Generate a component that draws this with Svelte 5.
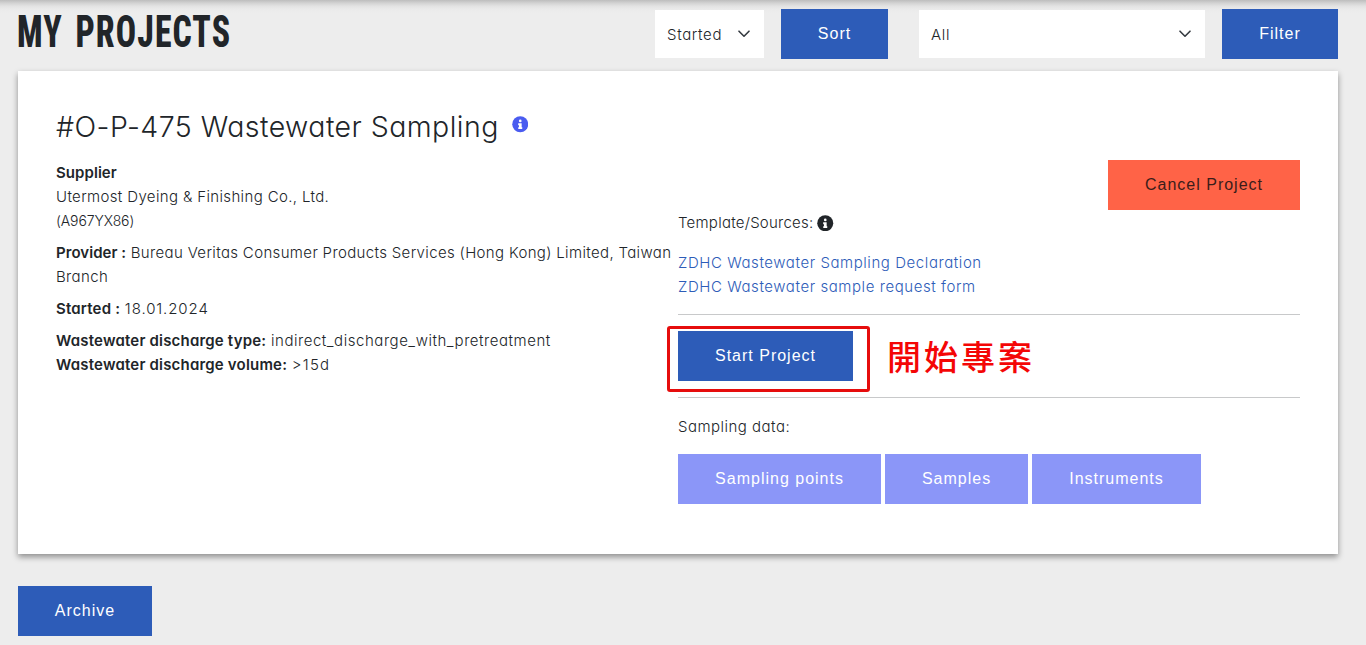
<script>
  const samplingActions = ['Sampling points', 'Samples', 'Instruments'];
</script>

{#snippet chevron()}
  <svg class="chevron" width="12" height="8" viewBox="0 0 12 8" fill="none" stroke="#343a40" stroke-width="1.6" stroke-linecap="round" stroke-linejoin="round"><path d="M1 1.2 6 6.2 11 1.2" /></svg>
{/snippet}

{#snippet info(color)}
  <svg class="info" width="16.5" height="16.5" viewBox="0 0 512 512"><circle cx="256" cy="256" r="248" fill={color} /><circle cx="256" cy="152" r="42" fill="#fff" /><path fill="#fff" d="M204 224h84c7 0 12 5 12 12v116h8c7 0 12 5 12 12v24c0 7-5 12-12 12h-104c-7 0-12-5-12-12v-24c0-7 5-12 12-12h12v-64h-12c-7 0-12-5-12-12v-40c0-7 5-12 12-12z" /></svg>
{/snippet}

<main>
  <header>
    <h1><span>MY PROJECTS</span></h1>
    <div class="select sort-by"><span>Started</span>{@render chevron()}</div>
    <button class="btn sort">Sort</button>
    <div class="select status"><span>All</span>{@render chevron()}</div>
    <button class="btn filter">Filter</button>
  </header>

  <section class="card">
    <div class="col">
      <h2><span>#O-P-475 Wastewater Sampling</span>{@render info('#4a5cf0')}</h2>
      <p><b>Supplier</b><br /><span class="company">Utermost Dyeing &amp; Finishing Co., Ltd.</span><br /><small>(A967YX86)</small></p>
      <p class="provider"><b>Provider :</b> <span class="company">Bureau Veritas Consumer Products Services (Hong Kong) Limited, Taiwan<br />Branch</span></p>
      <p><b class="wide">Started :</b> <span class="date">18.01.2024</span></p>
      <p><b class="wide">Wastewater discharge type:</b> <span class="type">indirect_discharge_with_pretreatment</span><br /><b class="wide">Wastewater discharge volume:</b> <span class="volume">&gt;15d</span></p>
    </div>
    <div class="col actions">
      <button class="btn cancel">Cancel Project</button>
      <div class="sources"><span>Template/Sources:</span>{@render info('#212529')}</div>
      <div class="links"><a href="#declaration">ZDHC Wastewater Sampling Declaration</a><a href="#request">ZDHC Wastewater sample request form</a></div>
      <div class="start-row">
        <div class="start"><button class="btn">Start Project</button><i class="marker"></i></div>
        <strong>開始專案</strong>
      </div>
      <div class="sampling">Sampling data:</div>
      <div class="group">
        {#each samplingActions as label}
          <button class="btn soft">{label}</button>
        {/each}
      </div>
    </div>
  </section>

  <button class="btn archive">Archive</button>
</main>

<style>
  :global(body) { margin: 0; background: #ededed; overflow: hidden; }
  * { box-sizing: border-box; }
  main {
    height: 645px; padding: 9px 28px 0 18px; color: #212529;
    font: 350 15px/24px Inter, "Noto Sans", sans-serif; font-feature-settings: "cv11"; letter-spacing: .48px;
    background: linear-gradient(#bdbdbd 0, #d2d2d2 3px, #e2e2e2 6px, #eaeaea 9px, #ededed 13px);
  }
  header { display: flex; height: 62px; align-items: flex-start; }
  h1 { flex: 1; margin: 0; font: 800 43.5px/46px "Roboto Condensed", Roboto, sans-serif; letter-spacing: 1.4px; word-spacing: 5px; white-space: nowrap; }
  h1 span { display: inline-block; transform: scaleX(.775); transform-origin: 0 0; margin: 1px 0 0 -1.5px; }
  .select { display: flex; align-items: center; justify-content: space-between; height: 48px; margin-top: 1px; padding: 1px 14px 0 12px; background: #fff; letter-spacing: .65px; }
  .chevron { margin-top: -2px; }
  .sort-by { width: 109px; margin-right: 17px; }
  .status { width: 286px; margin: 1px 17px 0 31px; }
  .btn { display: block; height: 50px; padding: 0; border: 0; background: #2d5cb8; color: #fff; font: 16px/24px "Liberation Sans", Arial, sans-serif; letter-spacing: 1px; }
  .sort { width: 107px; }
  .filter { width: 116px; }
  .card { display: flex; height: 483px; padding: 36px 38px; background: #fff; box-shadow: 0 3px 6px rgba(0,0,0,.4); }
  .col { width: 622px; white-space: nowrap; }
  h2 { display: flex; align-items: center; gap: 13px; margin: 0 0 16px; font-size: 28.5px; font-weight: 350; line-height: 38px; letter-spacing: .45px; }
  h2 span { padding-top: 1px; margin-bottom: -1px; }
  h2 .info { margin-top: -3px; }
  .info { display: block; }
  p { margin: 0 0 8px; }
  b { font-weight: 600; letter-spacing: .06px; }
  b.wide { letter-spacing: .19px; }
  small { font-size: 14px; letter-spacing: -.1px; }
  .company { letter-spacing: .36px; }
  .provider { word-spacing: -.1px; }
  .date { letter-spacing: .9px; }
  .type { letter-spacing: .54px; }
  .volume { letter-spacing: 1.2px; }
  .actions { display: flex; flex-direction: column; padding-top: 53px; }
  .cancel { width: 192px; align-self: flex-end; background: #ff6347; color: #3b1d1a; }
  .sources { display: flex; align-items: center; gap: 4px; margin-top: 1px; letter-spacing: .24px; }
  .links { display: flex; flex-direction: column; margin-top: 16px; padding-bottom: 15px; border-bottom: 1px solid #c8c9ca; letter-spacing: .57px; }
  a { color: #2d5cb8; text-decoration: none; }
  .start-row { display: flex; height: 83px; padding-top: 16px; border-bottom: 1px solid #c8c9ca; }
  .start { position: relative; width: 175px; height: 50px; }
  .start .btn { width: 175px; }
  .marker { position: absolute; left: -11px; top: -5px; width: 203px; height: 66px; border: 3px solid #e60d0d; border-radius: 3px; }
  strong { margin: 3px 0 0 34px; color: #f40606; font: 500 34px/44px "Noto Sans CJK TC", sans-serif; letter-spacing: 3px; }
  .sampling { margin-top: 17px; }
  .group { display: flex; gap: 4px; margin-top: 15px; }
  .soft { background: #8b96f8; }
  .soft:nth-child(1) { width: 203px; }
  .soft:nth-child(2) { width: 143px; }
  .soft:nth-child(3) { width: 169px; }
  .archive { width: 134px; margin-top: 32px; }
</style>
